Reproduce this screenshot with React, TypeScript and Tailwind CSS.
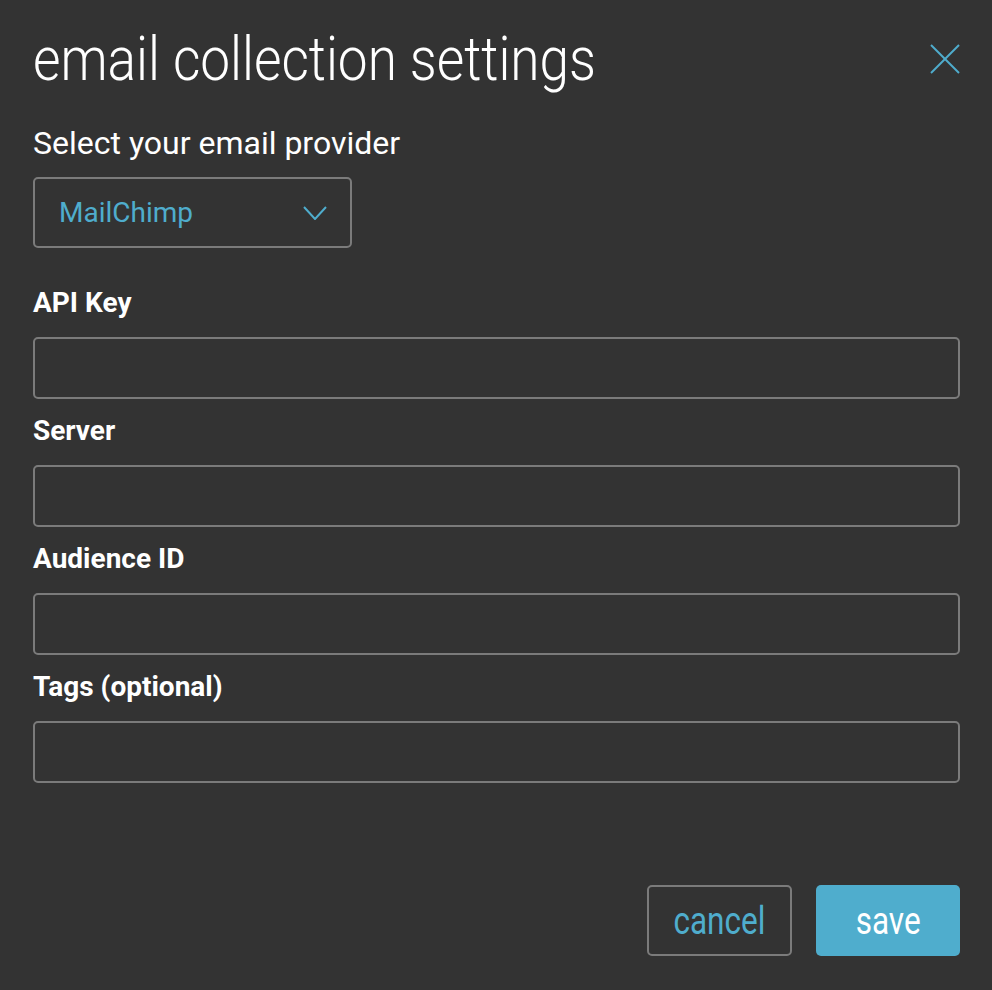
const fields = ["API Key", "Server", "Audience ID", "Tags (optional)"];

function CloseIcon() {
  return (
    <svg width="30" height="30" viewBox="0 0 30 30" fill="none" stroke="#4fadcd" strokeWidth="2">
      <line x1="1" y1="1" x2="29" y2="29" />
      <line x1="29" y1="1" x2="1" y2="29" />
    </svg>
  );
}

export default function App() {
  return (
    <div className="min-h-[990px] w-full bg-[#333333] pl-[33px] pr-[32px] pt-[28px] font-['Roboto',sans-serif] text-white">
      <div className="flex items-start justify-between">
        <h1 className="h-[62px] origin-left scale-x-[0.857] whitespace-nowrap text-[62px] font-light leading-none">
          email collection settings
        </h1>
        <button className="mt-[16px] h-[30px] w-[30px]">
          <CloseIcon />
        </button>
      </div>

      <p className="mt-[37px] text-[32px] leading-none">Select your email provider</p>

      <div className="mt-[18px] flex h-[71px] w-[319px] items-center justify-between rounded-[5px] border-2 border-[#7b7b7b] pl-[24px] pr-[23px]">
        <span className="text-[28px] leading-none text-[#4fadcd]">MailChimp</span>
        <svg width="24" height="14" viewBox="0 0 24 14" fill="none" stroke="#4fadcd" strokeWidth="2">
          <polyline points="1,1 12,13 23,1" />
        </svg>
      </div>

      <div className="mt-[41px] space-y-[18px]">
        {fields.map((label) => (
          <div key={label}>
            <label className="block text-[28px] font-bold leading-none">{label}</label>
            <input
              type="text"
              className="mt-[20px] block h-[62px] w-full rounded-[5px] border-2 border-[#7b7b7b] bg-transparent px-4 outline-none"
            />
          </div>
        ))}
      </div>

      <div className="mt-[102px] flex justify-end gap-[24px]">
        <button className="flex h-[71px] w-[145px] items-center justify-center rounded-[5px] border-2 border-[#7b7b7b]">
          <span className="inline-block scale-x-[0.83] text-[38px] leading-none text-[#4fadcd]">cancel</span>
        </button>
        <button className="flex h-[71px] w-[144px] items-center justify-center rounded-[5px] bg-[#4fadcd]">
          <span className="inline-block scale-x-[0.83] text-[38px] leading-none text-white">save</span>
        </button>
      </div>
    </div>
  );
}
